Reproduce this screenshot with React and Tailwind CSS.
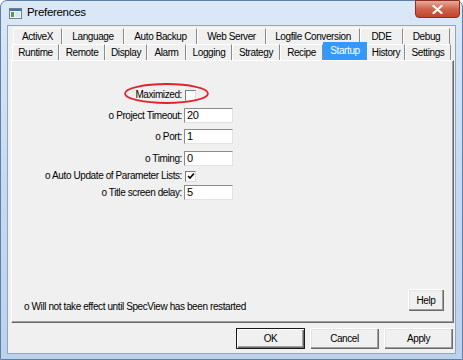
import React from 'react';

const rowOne = [
  { label: 'ActiveX', w: 'w-[49px]' },
  { label: 'Language', w: 'w-[62px]' },
  { label: 'Auto Backup', w: 'w-[73px]' },
  { label: 'Web Server', w: 'w-[69px]' },
  { label: 'Logfile Conversion', w: 'w-[94px]' },
  { label: 'DDE', w: 'w-[43px]' },
  { label: 'Debug', w: 'w-[47px]' },
];

const rowTwo = [
  { label: 'Runtime', w: 'w-[47px]' },
  { label: 'Remote', w: 'w-[46px]' },
  { label: 'Display', w: 'w-[42px]' },
  { label: 'Alarm', w: 'w-[39px]' },
  { label: 'Logging', w: 'w-[46px]' },
  { label: 'Strategy', w: 'w-[48px]' },
  { label: 'Recipe', w: 'w-[43px]' },
  { label: 'Startup', w: 'w-[44px]', active: true },
  { label: 'History', w: 'w-[38px]' },
  { label: 'Settings', w: 'w-[46px]' },
];

const Tab = ({ label, w, active }) => {
  if (active) {
    return (
      <div className={`${w} h-[18px] -mt-[2px] relative z-10 flex items-start justify-center pt-[1px] bg-[#3399ff] text-white`}>
        {label}
      </div>
    );
  }
  return (
    <div className={`${w} h-[16px] flex items-center justify-center border-t border-t-white border-l border-l-white border-r border-r-[#8a8a8a]`}>
      {label}
    </div>
  );
};

const TextBox = ({ value }) => (
  <div className="w-[49px] h-[15px] bg-white border border-t-[#8a8a8a] border-l-[#8a8a8a] border-b-[#e3e3e3] border-r-[#e3e3e3] pl-[2px] leading-[13px] text-[11px]">
    {value}
  </div>
);

const CheckBox = ({ checked }) => (
  <div className="w-[11px] h-[11px] bg-white border border-t-[#7a7a7a] border-l-[#7a7a7a] border-b-[#dcdcdc] border-r-[#dcdcdc] flex items-center justify-center">
    {checked && (
      <svg width="8" height="8" viewBox="0 0 8 8">
        <path d="M1 4 L3 6 L7 1.5" stroke="#000" strokeWidth="1.6" fill="none" />
      </svg>
    )}
  </div>
);

const Button = ({ children, className = '', primary }) => (
  <div
    className={`${className} flex items-center justify-center bg-[#f0f0f0] ${
      primary
        ? 'border border-[#1a1a1a] shadow-[inset_1px_1px_#fff,inset_-1px_-1px_#696969,inset_-2px_-2px_#a0a0a0]'
        : 'shadow-[inset_1px_1px_#fff,inset_-1px_-1px_#696969,inset_-2px_-2px_#a0a0a0,inset_2px_2px_#e3e3e3]'
    }`}
  >
    {children}
  </div>
);

const Row = ({ label, mt, children }) => (
  <div className={`flex items-center ${mt}`}>
    <div className="w-[170px] text-right leading-[14px]">{label}</div>
    {children}
  </div>
);

export default function App() {
  return (
    <div className="w-[463px] h-[360px] bg-white font-['Liberation_Sans',Arial,sans-serif] text-[10px] tracking-[-0.4px] text-black">
      <div className="w-full h-full rounded-t-[7px] border border-[#5f7fa6] bg-gradient-to-b from-[#dbe8f6] via-[#c6dbf1] to-[#bcd2ec] flex flex-col">
        {/* title bar */}
        <div className="h-[24px] relative flex items-center pl-[8px]">
          <svg width="13" height="11" viewBox="0 0 13 11">
            <rect x="0.5" y="0.5" width="12" height="10" fill="#f4f6f8" stroke="#6c7f95" />
            <rect x="1" y="1" width="11" height="2" fill="#4b6fa8" />
            <rect x="2" y="4" width="3" height="5" fill="#4f9e4a" />
            <rect x="6" y="4" width="5" height="5" fill="#d9e6f3" />
          </svg>
          <span className="ml-[5px] text-[11.5px] tracking-[-0.3px] text-black">Preferences</span>
          <div className="absolute right-[2px] top-[-1px] w-[45px] h-[18px] rounded-b-[4px] border border-[#8b2f23] bg-gradient-to-b from-[#e9a99b] via-[#d0634d] to-[#c0442c] flex items-center justify-center">
            <svg width="11" height="9" viewBox="0 0 11 9">
              <path d="M1.5 1 L9.5 8 M9.5 1 L1.5 8" stroke="#fff" strokeWidth="2.2" strokeLinecap="round" />
            </svg>
          </div>
        </div>

        {/* client area */}
        <div className="flex-1 mx-[6px] mb-[5px] border border-[#8ea6c3] bg-[#f0f0f0] flex flex-col">
          <div className="pt-[2px]">
            <div className="flex ml-[5px]">
              {rowOne.map((t) => (
                <Tab key={t.label} {...t} />
              ))}
            </div>
            <div className="flex ml-[4px]">
              {rowTwo.map((t) => (
                <Tab key={t.label} {...t} />
              ))}
            </div>
          </div>

          {/* startup panel */}
          <div className="relative ml-[3px] mr-[1px] h-[263px] border border-t-white border-l-white border-r-[#696969] border-b-[#696969] shadow-[inset_-1px_-1px_#a0a0a0] flex flex-col">
            <svg className="absolute left-[112px] top-[22px]" width="85" height="21" viewBox="0 0 85 21">
              <ellipse cx="42.5" cy="10.5" rx="41.5" ry="9.5" fill="none" stroke="#e3232b" strokeWidth="1.8" />
            </svg>

            <Row label="Maximized:" mt="mt-[27px]">
              <div className="ml-[3px]">
                <CheckBox />
              </div>
            </Row>
            <Row label="o Project Timeout:" mt="mt-[6px]">
              <div className="ml-[2px]">
                <TextBox value="20" />
              </div>
            </Row>
            <Row label="o Port:" mt="mt-[6px]">
              <div className="ml-[2px]">
                <TextBox value="1" />
              </div>
            </Row>
            <Row label="o Timing:" mt="mt-[7px]">
              <div className="ml-[2px]">
                <TextBox value="0" />
              </div>
            </Row>
            <Row label="o Auto Update of Parameter Lists:" mt="mt-[3px]">
              <div className="ml-[3px]">
                <CheckBox checked />
              </div>
            </Row>
            <Row label="o Title screen delay:" mt="mt-[2px]">
              <div className="ml-[2px]">
                <TextBox value="5" />
              </div>
            </Row>

            <div className="flex-1" />

            <div className="flex items-center justify-between pl-[12px] pr-[9px] pb-[9px]">
              <span className="mt-[14px] leading-[12px]">o Will not take effect until SpecView has been restarted</span>
              <Button className="w-[36px] h-[22px]">Help</Button>
            </div>
          </div>

          {/* dialog buttons */}
          <div className="flex justify-end gap-[5px] mt-[5px] mr-[2px]">
            <Button primary className="w-[69px] h-[21px]">OK</Button>
            <Button className="w-[69px] h-[21px]">Cancel</Button>
            <Button className="w-[69px] h-[21px]">Apply</Button>
          </div>
        </div>
      </div>
    </div>
  );
}
